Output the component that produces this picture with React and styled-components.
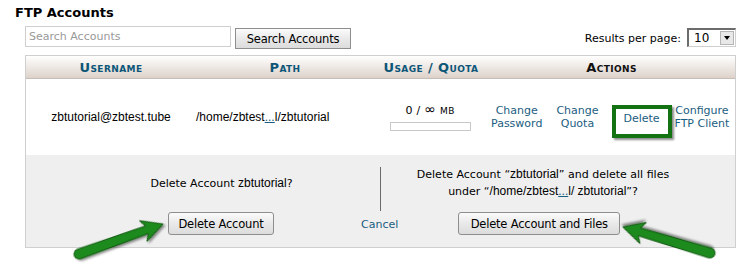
import React from 'react'
import styled, { createGlobalStyle } from 'styled-components'

const GlobalStyle = createGlobalStyle`
  html, body { margin: 0; padding: 0; background: #fff; }
  body {
    font-family: "DejaVu Sans", Verdana, sans-serif;
    font-size: 11px;
    color: #000;
  }
`

const COLS = '170px 178px 114px 1fr'

const Page = styled.div`
  position: relative;
  width: 750px;
  height: 267px;
  padding: 5px 15px 0;
  box-sizing: border-box;
  overflow: hidden;
`

const Title = styled.h2`
  margin: 0;
  font-size: 13px;
  font-weight: bold;
  line-height: 16px;
`

const Panel = styled.div`
  margin-left: 10px;
  width: 711px;
`

const Toolbar = styled.div`
  display: flex;
  align-items: flex-start;
  margin-top: 5px;
  height: 29px;
`

const SearchInput = styled.input`
  width: 206px;
  height: 21px;
  box-sizing: border-box;
  border: 1px solid #cfcfcf;
  padding: 0 3px;
  font-family: "DejaVu Sans", Verdana, sans-serif;
  font-size: 11px;
  outline: none;
  &::placeholder { color: #999; }
`

const Button = styled.button`
  width: ${p => p.$w}px;
  height: ${p => p.$h || 23}px;
  margin: ${p => p.$m || 0};
  padding: 0;
  box-sizing: border-box;
  font-family: "DejaVu Sans", Verdana, sans-serif;
  font-size: 11.5px;
  letter-spacing: -0.2px;
  color: #000;
  background: linear-gradient(#fbfbfb, #e9e9e9 50%, #dcdcdc);
  border: 1px solid #8e8e8e;
  border-radius: ${p => p.$r ?? 3}px;
  cursor: pointer;
`

const Spacer = styled.div`
  flex: 1;
`

const Label = styled.span`
  margin-top: 2px;
  margin-right: 6px;
  line-height: 21px;
`

const Select = styled.div`
  margin-top: 2px;
  width: 49px;
  height: 19px;
  box-sizing: border-box;
  display: flex;
  align-items: center;
  border-style: solid;
  border-color: #6c6c6c #d0d0d0 #d0d0d0 #6c6c6c;
  border-width: 2px 1px 1px 2px;
  font-size: 12px;
`

const SelectValue = styled.span`
  flex: 1;
  padding-left: 5px;
`

const SelectArrow = styled.span`
  width: 14px;
  height: 14px;
  margin-right: 1px;
  box-sizing: border-box;
  display: flex;
  align-items: center;
  justify-content: center;
  background: #e8e8e8;
  border: 1px solid #b5b5b5;
  &::after {
    content: '';
    border-left: 3px solid transparent;
    border-right: 3px solid transparent;
    border-top: 4px solid #000;
  }
`

const Table = styled.div`
  border: 1px solid #cfcfcf;
`

const HeaderRow = styled.div`
  display: grid;
  grid-template-columns: ${COLS};
  height: 22px;
  background: linear-gradient(#ffffff, #f3efec 35%, #ddd2ca);
  border-bottom: 1px solid #c6bdb6;
`

const HeaderCell = styled.div`
  text-align: center;
  line-height: 23px;
  font-size: 13px;
  font-weight: bold;
  font-variant: small-caps;
  letter-spacing: 0.4px;
  color: ${p => p.$plain ? '#111' : '#0c5678'};
`

const Row = styled.div`
  display: grid;
  grid-template-columns: ${COLS};
  height: 76px;
  align-items: center;
`

const PlainCell = styled.div`
  font-family: "Liberation Sans", Arial, sans-serif;
  font-size: 12px;
  text-align: ${p => p.$align || 'center'};
  padding-bottom: 1px;
`

const Link = styled.a`
  color: #1b5d80;
  text-decoration: none;
  cursor: pointer;
`

const Dots = styled.a`
  color: #1b5d80;
  text-decoration: underline;
`

const UsageCell = styled.div`
  display: flex;
  flex-direction: column;
  align-items: center;
  margin-left: -2px;
`

const UsageText = styled.span`
  line-height: 13px;
  letter-spacing: 0.3px;
`

const Infinity = styled.span`
  font-size: 14px;
  line-height: 13px;
`

const Small = styled.span`
  font-size: 9px;
`

const UsageBar = styled.div`
  margin-top: 4px;
  width: 81px;
  height: 9px;
  box-sizing: border-box;
  border: 1px solid #c8c8c8;
  background: #fff;
`

const Actions = styled.div`
  display: flex;
  align-items: center;
  padding-left: 3px;
`

const ActionLink = styled(Link)`
  display: block;
  text-align: center;
  line-height: 13px;
  margin-left: ${p => p.$ml || 0}px;
`

const Highlight = styled.div`
  margin: 9px 0 0 ${p => p.$ml || 0}px;
  width: 60px;
  height: 33px;
  box-sizing: border-box;
  border: 4px solid #137313;
  box-shadow: 2px 2px 2px rgba(0, 0, 0, 0.45);
  display: flex;
  justify-content: center;
  padding-top: 1px;
  line-height: 18px;
`

const Footer = styled.div`
  background: #efefef;
`

const FooterTop = styled.div`
  display: flex;
  height: 57px;
`

const LeftPrompt = styled.div`
  width: 354px;
  padding-left: 37px;
  box-sizing: border-box;
  display: flex;
  align-items: center;
  justify-content: center;
  padding-bottom: 1px;
`

const Divider = styled.div`
  width: 1px;
  margin: 12px 0 1px;
  background: #6a6a6a;
`

const RightPrompt = styled.div`
  flex: 1;
  display: flex;
  align-items: center;
  justify-content: center;
  text-align: center;
  line-height: 16px;
  padding: 0 30px 2px 0;
`

const Arial = styled.span`
  font-family: "Liberation Sans", Arial, sans-serif;
  font-size: 12px;
`

const FooterActions = styled.div`
  display: flex;
  align-items: center;
  padding: 0 0 12px 142px;
`

const CancelLink = styled(Link)`
  margin: 1px 0 0 87px;
`

const Overlay = styled.svg`
  position: absolute;
  left: 0;
  top: 0;
  pointer-events: none;
`

function Arrow({ x1, y1, x2, y2 }) {
  const dx = x2 - x1
  const dy = y2 - y1
  const L = Math.hypot(dx, dy)
  const deg = (Math.atan2(dy, dx) * 180) / Math.PI
  const d = `M0,-5 L${L - 17},-4 L${L - 21},-11 L${L},0 L${L - 21},11 L${L - 17},4 L0,5 A5,5 0 0 1 0,-5 Z`
  return (
    <g transform={`translate(${x1} ${y1}) rotate(${deg})`} filter="url(#shadow)">
      <path d={d} fill="#1d8a1d" stroke="#0e560e" strokeWidth="1" strokeLinejoin="round" />
    </g>
  )
}

export default function App() {
  return (
    <Page>
      <GlobalStyle />
      <Title>FTP Accounts</Title>
      <Panel>
        <Toolbar>
          <SearchInput placeholder="Search Accounts" />
          <Button $w={116} $h={21} $m="2px 0 0 4px" $r={0}>Search Accounts</Button>
          <Spacer />
          <Label>Results per page:</Label>
          <Select>
            <SelectValue>10</SelectValue>
            <SelectArrow />
          </Select>
        </Toolbar>

        <Table>
          <HeaderRow>
            <HeaderCell>Username</HeaderCell>
            <HeaderCell>Path</HeaderCell>
            <HeaderCell>Usage / Quota</HeaderCell>
            <HeaderCell $plain>Actions</HeaderCell>
          </HeaderRow>

          <Row>
            <PlainCell>zbtutorial@zbtest.tube</PlainCell>
            <PlainCell $align="left">/home/zbtest<Dots>...</Dots>l/zbtutorial</PlainCell>
            <UsageCell>
              <UsageText>0 / <Infinity>∞</Infinity> <Small>MB</Small></UsageText>
              <UsageBar />
            </UsageCell>
            <Actions>
              <ActionLink>Change<br />Password</ActionLink>
              <ActionLink $ml={14}>Change<br />Quota</ActionLink>
              <Highlight $ml={13}><Link>Delete</Link></Highlight>
              <ActionLink $ml={3}>Configure<br />FTP Client</ActionLink>
            </Actions>
          </Row>

          <Footer>
            <FooterTop>
              <LeftPrompt>
                <span>Delete Account <Arial>zbtutorial</Arial>?</span>
              </LeftPrompt>
              <Divider />
              <RightPrompt>
                <span>
                  Delete Account “<Arial>zbtutorial</Arial>” and delete all files<br />
                  under “<Arial>/home/zbtest<Dots>...</Dots>l/ zbtutorial</Arial>”?
                </span>
              </RightPrompt>
            </FooterTop>
            <FooterActions>
              <Button $w={106}>Delete Account</Button>
              <CancelLink>Cancel</CancelLink>
              <Button $w={162} $m="0 0 0 60px">Delete Account and Files</Button>
            </FooterActions>
          </Footer>
        </Table>
      </Panel>

      <Overlay width="750" height="267" viewBox="0 0 750 267">
        <defs>
          <filter id="shadow" x="-20%" y="-50%" width="140%" height="200%">
            <feDropShadow dx="1.5" dy="2" stdDeviation="1.2" floodColor="#000" floodOpacity="0.45" />
          </filter>
        </defs>
        <Arrow x1={79} y1={254} x2={163} y2={224} />
        <Arrow x1={710} y1={253} x2={623} y2={227} />
      </Overlay>
    </Page>
  )
}
